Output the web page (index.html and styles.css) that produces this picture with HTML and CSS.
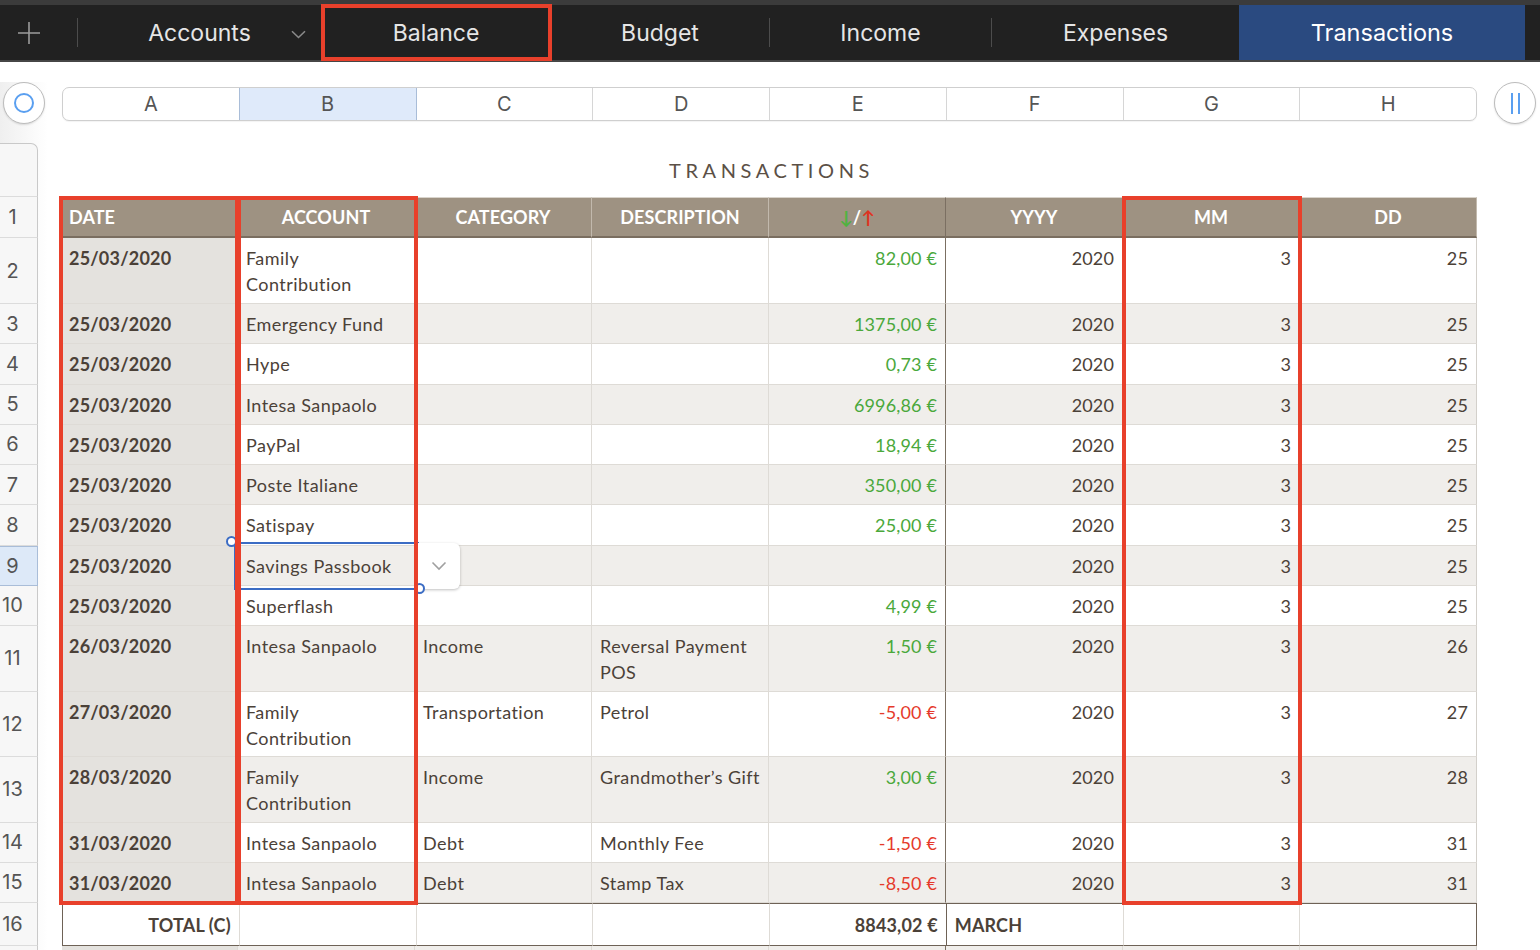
FILE: index.html
```html
<!DOCTYPE html>
<html lang="en">
<head>
<meta charset="utf-8">
<title>Transactions</title>
<link rel="stylesheet" href="styles.css">
</head>
<body>
<div class="tabbar">
  <div class="tab-plus">
    <svg width="24" height="24" viewBox="0 0 24 24"><path d="M12 1v22M1 12h22" stroke="#9c9c9c" stroke-width="1.6" fill="none"/></svg>
  </div>
  <div class="sep"></div>
  <div class="tab tab-accounts">
    <span class="tab-label">Accounts</span>
    <svg class="chev" width="15" height="9" viewBox="0 0 15 9"><path d="M1 1.2l6.5 6.3 6.5-6.3" stroke="#8a8a8a" stroke-width="1.6" fill="none"/></svg>
  </div>
  <div class="sep"></div>
  <div class="tab tab-balance">Balance</div>
  <div class="sep"></div>
  <div class="tab tab-budget">Budget</div>
  <div class="sep"></div>
  <div class="tab tab-income">Income</div>
  <div class="sep"></div>
  <div class="tab tab-expenses">Expenses</div>
  <div class="tab tab-trans">Transactions</div>
</div>

<div class="workspace">
  <div class="colbar">
    <div class="circle-btn"><span class="ring"></span></div>
    <div class="letters">
      <div class="letter">A</div>
      <div class="letter sel-col">B</div>
      <div class="letter">C</div>
      <div class="letter">D</div>
      <div class="letter">E</div>
      <div class="letter">F</div>
      <div class="letter">G</div>
      <div class="letter last">H</div>
    </div>
    <div class="circle-btn right"><span class="bar"></span><span class="bar"></span></div>
  </div>

  <div class="sheet">
    <div class="row h-title">
      <div class="rn first"></div><div class="sp"></div>
      <div class="title">TRANSACTIONS</div>
    </div>

    <div class="row head h-head">
      <div class="rn">1</div><div class="sp"></div>
      <div class="cells">
        <div class="c a">DATE</div>
        <div class="c">ACCOUNT</div>
        <div class="c">CATEGORY</div>
        <div class="c">DESCRIPTION</div>
        <div class="c e"><span class="g">↓</span>/<span class="neg">↑</span></div>
        <div class="c">YYYY</div>
        <div class="c">MM</div>
        <div class="c last">DD</div>
      </div>
    </div>

    <div class="row h2">
      <div class="rn">2</div><div class="sp"></div>
      <div class="cells">
        <div class="c a">25/03/2020</div>
        <div class="c t">Family<br>Contribution</div>
        <div class="c"></div>
        <div class="c"></div>
        <div class="c e r g">82,00 €</div>
        <div class="c r">2020</div>
        <div class="c r">3</div>
        <div class="c r last">25</div>
      </div>
    </div>

    <div class="row h1 alt">
      <div class="rn">3</div><div class="sp"></div>
      <div class="cells">
        <div class="c a">25/03/2020</div>
        <div class="c t">Emergency Fund</div>
        <div class="c"></div>
        <div class="c"></div>
        <div class="c e r g">1375,00 €</div>
        <div class="c r">2020</div>
        <div class="c r">3</div>
        <div class="c r last">25</div>
      </div>
    </div>

    <div class="row h1">
      <div class="rn">4</div><div class="sp"></div>
      <div class="cells">
        <div class="c a">25/03/2020</div>
        <div class="c t">Hype</div>
        <div class="c"></div>
        <div class="c"></div>
        <div class="c e r g">0,73 €</div>
        <div class="c r">2020</div>
        <div class="c r">3</div>
        <div class="c r last">25</div>
      </div>
    </div>

    <div class="row h1 alt">
      <div class="rn">5</div><div class="sp"></div>
      <div class="cells">
        <div class="c a">25/03/2020</div>
        <div class="c t">Intesa Sanpaolo</div>
        <div class="c"></div>
        <div class="c"></div>
        <div class="c e r g">6996,86 €</div>
        <div class="c r">2020</div>
        <div class="c r">3</div>
        <div class="c r last">25</div>
      </div>
    </div>

    <div class="row h1">
      <div class="rn">6</div><div class="sp"></div>
      <div class="cells">
        <div class="c a">25/03/2020</div>
        <div class="c t">PayPal</div>
        <div class="c"></div>
        <div class="c"></div>
        <div class="c e r g">18,94 €</div>
        <div class="c r">2020</div>
        <div class="c r">3</div>
        <div class="c r last">25</div>
      </div>
    </div>

    <div class="row h1 alt">
      <div class="rn">7</div><div class="sp"></div>
      <div class="cells">
        <div class="c a">25/03/2020</div>
        <div class="c t">Poste Italiane</div>
        <div class="c"></div>
        <div class="c"></div>
        <div class="c e r g">350,00 €</div>
        <div class="c r">2020</div>
        <div class="c r">3</div>
        <div class="c r last">25</div>
      </div>
    </div>

    <div class="row h1">
      <div class="rn">8</div><div class="sp"></div>
      <div class="cells">
        <div class="c a">25/03/2020</div>
        <div class="c t">Satispay</div>
        <div class="c"></div>
        <div class="c"></div>
        <div class="c e r g">25,00 €</div>
        <div class="c r">2020</div>
        <div class="c r">3</div>
        <div class="c r last">25</div>
      </div>
    </div>

    <div class="row h1 alt">
      <div class="rn active">9</div><div class="sp"></div>
      <div class="cells">
        <div class="c a">25/03/2020</div>
        <div class="c t">Savings Passbook</div>
        <div class="c"></div>
        <div class="c"></div>
        <div class="c e r g"></div>
        <div class="c r">2020</div>
        <div class="c r">3</div>
        <div class="c r last">25</div>
      </div>
    </div>

    <div class="row h1">
      <div class="rn">10</div><div class="sp"></div>
      <div class="cells">
        <div class="c a">25/03/2020</div>
        <div class="c t">Superflash</div>
        <div class="c"></div>
        <div class="c"></div>
        <div class="c e r g">4,99 €</div>
        <div class="c r">2020</div>
        <div class="c r">3</div>
        <div class="c r last">25</div>
      </div>
    </div>

    <div class="row h2b alt">
      <div class="rn">11</div><div class="sp"></div>
      <div class="cells">
        <div class="c a">26/03/2020</div>
        <div class="c t">Intesa Sanpaolo</div>
        <div class="c t">Income</div>
        <div class="c t">Reversal Payment<br>POS</div>
        <div class="c e r g">1,50 €</div>
        <div class="c r">2020</div>
        <div class="c r">3</div>
        <div class="c r last">26</div>
      </div>
    </div>

    <div class="row h2b">
      <div class="rn">12</div><div class="sp"></div>
      <div class="cells">
        <div class="c a">27/03/2020</div>
        <div class="c t">Family<br>Contribution</div>
        <div class="c t">Transportation</div>
        <div class="c t">Petrol</div>
        <div class="c e r neg">-5,00 €</div>
        <div class="c r">2020</div>
        <div class="c r">3</div>
        <div class="c r last">27</div>
      </div>
    </div>

    <div class="row h2b alt">
      <div class="rn">13</div><div class="sp"></div>
      <div class="cells">
        <div class="c a">28/03/2020</div>
        <div class="c t">Family<br>Contribution</div>
        <div class="c t">Income</div>
        <div class="c t">Grandmother’s Gift</div>
        <div class="c e r g">3,00 €</div>
        <div class="c r">2020</div>
        <div class="c r">3</div>
        <div class="c r last">28</div>
      </div>
    </div>

    <div class="row h1">
      <div class="rn">14</div><div class="sp"></div>
      <div class="cells">
        <div class="c a">31/03/2020</div>
        <div class="c t">Intesa Sanpaolo</div>
        <div class="c t">Debt</div>
        <div class="c t">Monthly Fee</div>
        <div class="c e r neg">-1,50 €</div>
        <div class="c r">2020</div>
        <div class="c r">3</div>
        <div class="c r last">31</div>
      </div>
    </div>

    <div class="row h1 alt">
      <div class="rn">15</div><div class="sp"></div>
      <div class="cells">
        <div class="c a">31/03/2020</div>
        <div class="c t">Intesa Sanpaolo</div>
        <div class="c t">Debt</div>
        <div class="c t">Stamp Tax</div>
        <div class="c e r neg">-8,50 €</div>
        <div class="c r">2020</div>
        <div class="c r">3</div>
        <div class="c r last">31</div>
      </div>
    </div>

    <div class="row total">
      <div class="rn">16</div><div class="sp"></div>
      <div class="cells">
        <div class="c r b">TOTAL (C)</div>
        <div class="c"></div>
        <div class="c"></div>
        <div class="c"></div>
        <div class="c e r b">8843,02 €</div>
        <div class="c b">MARCH</div>
        <div class="c"></div>
        <div class="c last"></div>
      </div>
    </div>

    <div class="row tail">
      <div class="rn"></div><div class="sp"></div>
      <div class="cells">
        <div class="c a"></div>
        <div class="c"></div>
        <div class="c"></div>
        <div class="c"></div>
        <div class="c e"></div>
        <div class="c"></div>
        <div class="c"></div>
        <div class="c last"></div>
      </div>
    </div>
  </div>
</div>

<div class="selection"></div>
<div class="dropdown">
  <svg width="16" height="10" viewBox="0 0 16 10"><path d="M1.5 1.5l6.5 6.5 6.5-6.5" stroke="#a0a0a0" stroke-width="1.6" fill="none"/></svg>
</div>
<div class="handle h-tl"></div>
<div class="handle h-br"></div>

<div class="mark m-bal"></div>
<div class="mark m-a"></div>
<div class="mark m-b"></div>
<div class="mark m-g"></div>
</body>
</html>
```
FILE: styles.css
```css
* { box-sizing: border-box; margin: 0; padding: 0; }
html, body { width: 1540px; height: 950px; overflow: hidden; background: #fff; }
body {
  position: relative;
  font-family: Lato, "Noto Sans", sans-serif;
  color: #4b4138;
}

/* ---------- tab bar ---------- */
.tabbar {
  height: 62px;
  background: #212121;
  border-top: 5px solid #3b3b3b;
  border-bottom: 2px solid #464646;
  display: flex;
  align-items: stretch;
  font-family: Inter, "Liberation Sans", sans-serif;
  font-size: 23px;
  color: #e6e6e6;
}
.tab-plus {
  width: 77px;
  display: flex;
  align-items: center;
  padding-left: 17px;
}
.sep {
  width: 1px;
  height: 29px;
  align-self: center;
  background: #4c4c4c;
}
.tab {
  display: flex;
  align-items: center;
  justify-content: center;
}
.tab-accounts {
  width: 243px;
  display: grid;
  grid-template-columns: 1fr auto 1fr;
  align-items: center;
}
.tab-accounts .tab-label { grid-column: 2; }
.tab-accounts .chev { grid-column: 3; justify-self: end; margin-right: 15px; margin-top: 3px; }
.tab-balance { width: 228px; }
.tab-budget { width: 218px; }
.tab-income { width: 221px; }
.tab-expenses { width: 247px; }
.tab-trans { width: 286px; background: #2a4a80; color: #fff; font-size: 23.5px; }

/* ---------- workspace ---------- */
.workspace {
  background: linear-gradient(90deg, #efefef 0, #fff 48px);
  height: 888px;
}
.colbar {
  height: 42px;
  margin-top: 20px;
  display: flex;
  align-items: center;
}
.circle-btn {
  width: 42px;
  height: 42px;
  margin-left: 3px;
  border-radius: 50%;
  border: 1px solid #bcbcbc;
  background: #fff;
  box-shadow: 0 1px 2px rgba(0,0,0,0.12);
  display: flex;
  align-items: center;
  justify-content: center;
}
.circle-btn .ring {
  width: 20px;
  height: 20px;
  border-radius: 50%;
  border: 2px solid #5a9ff0;
}
.circle-btn.right { margin-left: 17px; gap: 5px; }
.circle-btn .bar { width: 2px; height: 21px; background: #5a9ff0; }
.letters {
  margin-left: 17px;
  width: 1415px;
  height: 34px;
  margin-top: 1px;
  border: 1px solid #cfcfcf;
  border-radius: 7px;
  background: #fff;
  display: flex;
  overflow: hidden;
  box-shadow: 0 1px 1px rgba(0,0,0,0.05);
}
.letter {
  flex: 1 1 0;
  text-align: center;
  line-height: 32px;
  font-family: Inter, "Liberation Sans", sans-serif;
  font-size: 20px;
  color: #555;
  border-right: 1px solid #d6d6d6;
}
.letter.last { border-right: 0; }
.letter.sel-col {
  background: #dfeafa;
  border-left: 1px solid #a9bdd8;
  border-right: 1px solid #a9bdd8;
  margin-left: -1px;
}

/* ---------- sheet ---------- */
.sheet { margin-top: 19px; }
.row { display: flex; }
.rn {
  width: 38px;
  flex: none;
  background: #f7f7f7;
  border-right: 1px solid #c9c9c9;
  border-bottom: 1px solid #dcdcdc;
  display: flex;
  align-items: center;
  justify-content: center;
  padding-right: 12px;
  font-family: Inter, "Liberation Sans", sans-serif;
  font-size: 20px;
  color: #555;
}
.rn.first {
  border-top: 1px solid #c9c9c9;
  border-top-right-radius: 7px;
}
.rn.active {
  background: #dde9f8;
  border: 1px solid #a9bdd8;
  border-left: 0;
}
.sp { width: 24px; flex: none; }
.cells { width: 1415px; display: flex; }
.c {
  flex: 1 1 0;
  min-width: 0;
  padding: 7px 8px;
  font-size: 18px;
  line-height: 26px;
  border-right: 1px solid #dedbd6;
  border-bottom: 1px solid #dedbd6;
  background: #fff;
  white-space: nowrap;
  letter-spacing: 0.15px;
}
.c.t { letter-spacing: 0.45px; }
.c.last { border-right: 1px solid #d3d0cb; }
.c.a { background: #e4e2de; font-weight: 700; padding-left: 7px; letter-spacing: 0.2px; }
.row.alt .c { background: #f0eeeb; }
.row.alt .c.a { background: #e4e2de; }
.c.r { text-align: right; }
.c.e { border-right: 1px solid #7b6f62; }
.g { color: #4aa83b; }
.neg { color: #e53a2b; }
.b { font-weight: 700; }

.h-title { height: 54px; }
.title {
  width: 1415px;
  text-align: center;
  font-size: 20px;
  letter-spacing: 4.6px;
  color: #5b5046;
  line-height: 54px;
  padding-left: 4px;
}
.h-head { height: 41px; }
.head .c {
  background: #9e9282;
  color: #fff;
  font-weight: 700;
  text-align: center;
  line-height: 38px;
  padding: 0 8px;
  letter-spacing: 0.1px;
  border-top: 1px solid #d9d4cc;
  border-right: 1px solid #c2b9ad;
  border-bottom: 2px solid #7a6e60;
}
.head .c.a { text-align: left; padding-left: 7px; background: #9e9282; }
.head .c.e { border-right: 1px solid #7b6f62; }
.head .c .g { color: #4fb240; }
.head .c .neg { color: #e0321f; }

.h1 { height: 40.25px; }
.h2 { height: 66px; }
.h2b { height: 65.5px; }

.total { height: 43px; }
.total .c {
  background: #fff;
  padding-top: 8px;
  border-top: 1px solid #6e6256;
  border-bottom: 1px solid #6e6256;
}
.total .c:first-child { border-left: 1px solid #6e6256; }
.total .c.last { border-right: 1px solid #6e6256; }
.total .c.e { border-right: 1px solid #6e6256; }
.tail { height: 30px; }
.tail .c { background: #f0eeeb; }
.tail .c.a { background: #e4e2de; }

/* ---------- overlays ---------- */
.selection {
  position: absolute;
  left: 234px;
  top: 542px;
  width: 185px;
  height: 48px;
  border: 2px solid #3b6cc4;
}
.dropdown {
  position: absolute;
  left: 418px;
  top: 543px;
  width: 42px;
  height: 46px;
  background: #fff;
  border-radius: 0 6px 6px 0;
  box-shadow: 0 1px 3px rgba(0,0,0,0.25);
  display: flex;
  align-items: center;
  justify-content: center;
}
.handle {
  position: absolute;
  width: 11px;
  height: 11px;
  border-radius: 50%;
  border: 2px solid #3b6cc4;
  background: #fff;
}
.h-tl { left: 226px; top: 536px; }
.h-br { left: 414px; top: 583px; }

.mark {
  position: absolute;
  border: 4px solid #e8402b;
  pointer-events: none;
}
.m-bal { left: 321px; top: 4px; width: 231px; height: 57px; }
.m-a { left: 59px; top: 196px; width: 180px; height: 709px; }
.m-b { left: 237px; top: 196px; width: 181px; height: 709px; }
.m-g { left: 1122px; top: 196px; width: 180px; height: 709px; }
```
